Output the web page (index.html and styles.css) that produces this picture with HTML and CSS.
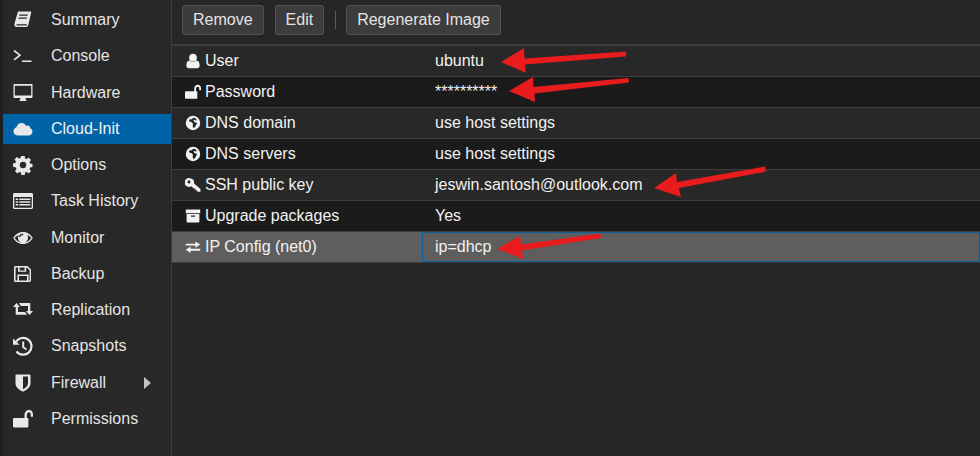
FILE: index.html
```html
<!DOCTYPE html>
<html lang="en">
  <head>
    <meta charset="UTF-8" />
    <title>Cloud-Init</title>
    <link rel="stylesheet" href="styles.css">
  </head>
  <body>
    <svg class="defs" width="0" height="0">
      <symbol id="i-book" viewBox="0 0 20 20"><path d="M5 1.5h12.5c.6 0 .9.5.7 1.1L15.3 15c-.4 1.3-1 2-2.3 2H3.5c-1.3 0-2.4-1-2-3L1.8 12.5 5 1.5zM6.5 4.5l-.4 1.2h8.4l.4-1.2H6.500zM5.600 7.500l-.4 1.200h8.400l.4-1.200H5.600zM3.600 14.300c-.3.800 0 1.200.7 1.200h8.700c.5 0 .8-.2 1-.7l.2-.5H3.600z" fill-rule="evenodd"/></symbol>
      <symbol id="i-term" viewBox="0 0 20 20"><path d="M1 4.500l6 4.700-6 4.700M9 15.200h9.500" fill="none" stroke="currentColor" stroke-width="1.600"/></symbol>
      <symbol id="i-desktop" viewBox="0 0 20 20"><path d="M1.500 1h17c.6 0 1 .4 1 1v12c0 .6-.4 1-1 1h-6c0 1 .5 1.700 1 2.200v.8h-7v-.8c.5-.5 1-1.200 1-2.200h-6c-.6 0-1-.4-1-1V2c0-.6.4-1 1-1zM1.800 2.800v9.700h16.400V2.800H1.800z" fill-rule="evenodd"/></symbol>
      <symbol id="i-cloud" viewBox="0 0 20 20"><path d="M5 16.500c-2.500 0-4.500-1.800-4.500-4.200 0-2 1.300-3.600 3.100-4C4 5.800 6 4 8.500 4c2.100 0 3.800 1.200 4.600 3 .5-.3 1-.4 1.500-.4 1.500 0 2.700 1.200 2.700 2.700 1.300.5 2.200 1.700 2.200 3.200 0 2.200-1.700 4-4 4H5z"/></symbol>
      <symbol id="i-gear" viewBox="0 0 20 20"><path d="M8.300 1h3.400l.4 2.500 1.500.6 2.100-1.500 2.300 2.300-1.500 2.100.6 1.500 2.400.4v3.200l-2.400.4-.6 1.500 1.500 2.100-2.300 2.300-2.100-1.500-1.500.6-.4 2.400H8.300l-.4-2.400-1.500-.6-2.100 1.500-2.300-2.300 1.500-2.100-.6-1.500L0 11.600V8.400l2.400-.4.6-1.500-1.500-2.100 2.300-2.300 2.100 1.500 1.500-.6L8.300 1zM10 6.800a3.200 3.200 0 1 0 0 6.400 3.200 3.200 0 0 0 0-6.400z" fill-rule="evenodd"/></symbol>
      <symbol id="i-tasks" viewBox="0 0 20 20"><path d="M1.500 2h17c.8 0 1.500.7 1.500 1.500v13c0 .8-.7 1.500-1.500 1.500h-17C.7 18 0 17.300 0 16.500v-13C0 2.700.7 2 1.500 2zM1.300 6v10.300c0 .2.200.4.400.4h16.600c.2 0 .4-.2.400-.4V6H1.300zM2.700 7.600h2.500v1.500H2.700zM6.300 7.600h11v1.500h-11zM2.700 10.300h2.500v1.500H2.700zM6.300 10.300h11v1.500h-11zM2.700 13h2.500v1.500H2.700zM6.300 13h11v1.500h-11z" fill-rule="evenodd"/></symbol>
      <symbol id="i-eye" viewBox="0 0 20 20"><path d="M10 4c4.300 0 7.800 2.600 9.800 6-2 3.400-5.500 6-9.800 6S2.200 13.400.2 10c2-3.400 5.500-6 9.800-6zM1.700 10c1.500 2.300 3.800 4.100 6.500 4.600A5.200 5.200 0 0 1 5 10c0-1.100.3-2.100.9-2.900-1.700.7-3.100 1.500-4.200 2.900zM10 5.500a4.500 4.500 0 0 0-4 2.500c0 .6.500 1 1 1s1-.5 1-1.200c.8-.5 1.300-.7 2-.7 0 0 .3 0 .3-.8 0-.3-.1-.5-.3-.8zM14.100 7.100c.6.800.9 1.800.9 2.900a5.200 5.200 0 0 1-3.200 4.600c2.700-.5 5-2.300 6.500-4.600-1.100-1.400-2.500-2.200-4.200-2.900z" fill-rule="evenodd"/></symbol>
      <symbol id="i-save" viewBox="0 0 20 20"><path d="M2.500 2h12l3.500 3.500v11c0 .8-.7 1.500-1.500 1.500h-14C1.700 18 1 17.300 1 16.500v-13C1 2.700 1.700 2 2.500 2zM2.600 3.600v12.800h1.800v-6h11.200v6h1V6.200l-2.900-2.600h-.5v4.200H5V3.600H2.600zM6.600 3.600v2.800h5V3.600h-5zM6 12v4.400h8V12H6z" fill-rule="evenodd"/></symbol>
      <symbol id="i-retweet" viewBox="0 0 20 20"><path d="M0 7l3.500-4L7 7H5v5h7l2.200 2.800H3.500c-.5 0-.8-.3-.8-.8V7H0zM5.800 3h10.700c.5 0 .8.300.8.800V11H20l-3.500 4L13 11h2V6H8L5.800 3z"/></symbol>
      <symbol id="i-history" viewBox="0 0 20 20"><path d="M3.200 5.500A8.400 8.400 0 1 1 3.500 15.500" fill="none" stroke="currentColor" stroke-width="2.200"/><path d="M0 2.500l6.500 6.300H0z"/><path d="M9.200 5.500h2v5.300l3 2.100-1.100 1.400-3.900-2.900V5.500z"/></symbol>
      <symbol id="i-shield" viewBox="0 0 20 20"><path d="M3.300 1.500h13.400c.5 0 .8.300.8.800v8.200c0 4-4.300 6.800-7.500 8.200-3.200-1.400-7.500-4.200-7.500-8.200V2.300c0-.5.300-.8.800-.8zM10 3.500v12.700c2.500-1.300 5-3.100 5-5.700v-7h-5z" fill-rule="evenodd"/></symbol>
      <symbol id="i-unlock" viewBox="0 0 20 20"><path d="M1 9h10.500V6.200C11.500 3 13.500 1 16 1s4 2 4 4.500v2.300h-2.200V5.600c0-1.200-.7-2.300-1.800-2.300s-2.200 1-2.200 3V9h.7c.5 0 .9.400.9.900v7.700c0 .5-.4.900-.9.900H1.100c-.6 0-1.100-.4-1.100-.9V9.900C0 9.400.5 9 1 9z"/></symbol>
      <symbol id="i-user" viewBox="0 0 20 20"><circle cx="10" cy="5.800" r="4.800"/><path d="M5.500 9.500c1.200 1 2.800 1.500 4.500 1.500s3.300-.5 4.500-1.500c2.500.2 3.800 2.500 3.800 6 0 2-1.200 3.500-3 3.500H4.700c-1.800 0-3-1.500-3-3.500 0-3.500 1.300-5.800 3.800-6z"/></symbol>
      <symbol id="i-globe" viewBox="0 0 20 20"><path d="M10 1a9 9 0 1 1 0 18 9 9 0 0 1 0-18zM11 3.500l-1.500.5-1 1.500-2-.5-1.500 2 1 1.500 2.500.5 1.500 2-.5 3 1.500 2.500 2-2 1-2.500 1.500-1-1.500-1.500-2-.5L10.500 7l1.500-1 1.500 1 1.500-.5-2-2.500-2-.5z" fill-rule="evenodd"/></symbol>
      <symbol id="i-key" viewBox="0 0 20 20"><path d="M6 1.500a5.500 5.500 0 0 1 5.300 6.700l8 6.800v3.500h-3.800l-.5-2h-2v-2h-2l-3-3A5.500 5.500 0 1 1 6 1.500zM5 4.200a1.900 1.900 0 1 0 0 3.800 1.900 1.900 0 0 0 0-3.800z" fill-rule="evenodd"/></symbol>
      <symbol id="i-archive" viewBox="0 0 20 20"><path d="M1 2h18v4.500H1zM2 7.500h16v9.500c0 .6-.4 1-1 1H3c-.6 0-1-.4-1-1V7.500zM7.500 9.500v1.500h5V9.500h-5z" fill-rule="evenodd"/></symbol>
      <symbol id="i-exchange" viewBox="0 0 20 20"><path d="M1 5.800h12V3l6 4-6 4V8.200H1zM19 12.200v2.400H7v2.900l-6-4.100 6-4v2.800z"/></symbol>
    </svg>

    <div class="page">
      <nav class="sidebar">
        <a class="nav-item"><svg class="nav-icon"><use href="#i-book"/></svg>Summary</a>
        <a class="nav-item"><svg class="nav-icon"><use href="#i-term"/></svg>Console</a>
        <a class="nav-item"><svg class="nav-icon"><use href="#i-desktop"/></svg>Hardware</a>
        <a class="nav-item active"><svg class="nav-icon"><use href="#i-cloud"/></svg>Cloud-Init</a>
        <a class="nav-item"><svg class="nav-icon"><use href="#i-gear"/></svg>Options</a>
        <a class="nav-item"><svg class="nav-icon"><use href="#i-tasks"/></svg>Task History</a>
        <a class="nav-item"><svg class="nav-icon"><use href="#i-eye"/></svg>Monitor</a>
        <a class="nav-item"><svg class="nav-icon"><use href="#i-save"/></svg>Backup</a>
        <a class="nav-item"><svg class="nav-icon"><use href="#i-retweet"/></svg>Replication</a>
        <a class="nav-item"><svg class="nav-icon"><use href="#i-history"/></svg>Snapshots</a>
        <a class="nav-item"><svg class="nav-icon"><use href="#i-shield"/></svg>Firewall<span class="caret"></span></a>
        <a class="nav-item"><svg class="nav-icon"><use href="#i-unlock"/></svg>Permissions</a>
      </nav>

      <main class="content">
        <div class="toolbar">
          <button class="btn">Remove</button>
          <button class="btn">Edit</button>
          <span class="sep"></span>
          <button class="btn">Regenerate Image</button>
        </div>

        <div class="row">
          <div class="key"><svg class="row-icon"><use href="#i-user"/></svg>User</div>
          <div class="val">ubuntu</div>
        </div>
        <div class="row alt">
          <div class="key"><svg class="row-icon"><use href="#i-unlock"/></svg>Password</div>
          <div class="val">**********</div>
        </div>
        <div class="row">
          <div class="key"><svg class="row-icon"><use href="#i-globe"/></svg>DNS domain</div>
          <div class="val">use host settings</div>
        </div>
        <div class="row alt">
          <div class="key"><svg class="row-icon"><use href="#i-globe"/></svg>DNS servers</div>
          <div class="val">use host settings</div>
        </div>
        <div class="row">
          <div class="key"><svg class="row-icon"><use href="#i-key"/></svg>SSH public key</div>
          <div class="val">jeswin.santosh@outlook.com</div>
        </div>
        <div class="row alt">
          <div class="key"><svg class="row-icon"><use href="#i-archive"/></svg>Upgrade packages</div>
          <div class="val">Yes</div>
        </div>
        <div class="row selected">
          <div class="key"><svg class="row-icon"><use href="#i-exchange"/></svg>IP Config (net0)</div>
          <div class="val">ip=dhcp</div>
        </div>
      </main>
    </div>

    <!-- red arrows drawn on top of the screenshot -->
    <svg class="arrows" width="980" height="456" viewBox="0 0 980 456">
      <path d="M501 62L524 48 524.500 58.500 626 51.500 626 56.500 525 64.500 526 73z"/>
      <path d="M509 91L533 77 533.500 87 628.500 78 629 82.500 534.500 93.500 535 102z"/>
      <path d="M654 188L676 173 677 182 765 166.500 766 171.500 679 188 681 197z"/>
      <path d="M497 249L520 236 521 244.500 600.500 233.500 601 238 522 250.500 523 259z"/>
    </svg>
  </body>
</html>
```

FILE: styles.css
```css
* {
  box-sizing: border-box;
}

html,
body {
  margin: 0;
  height: 100%;
  overflow: hidden;
}

body {
  background-color: #262626;
  color: #f2f2f2;
  font-family: "Liberation Sans", Arial, sans-serif;
  font-size: 16px;
}

.defs {
  position: absolute;
}

.page {
  display: flex;
  height: 456px;
}

.sidebar {
  width: 172px;
  flex: none;
  display: flex;
  flex-direction: column;
  gap: 6.25px;
  padding-top: 5px;
  border-left: 3px solid #1f1f1f;
  border-right: 1px solid #3e3e3e;
  background-color: #282828;
}

.nav-item {
  display: flex;
  align-items: center;
  height: 30px;
  color: #e4e4e4;
}

.nav-item.active {
  background-color: #0063a8;
  color: #f2f2f2;
}

.nav-icon {
  width: 20px;
  height: 20px;
  flex: none;
  margin: 0 18px 0 10px;
  fill: #e8e8e8;
  color: #e8e8e8;
}

.caret {
  margin-left: auto;
  margin-right: 20px;
  border-left: 7px solid #c4c4c4;
  border-top: 6px solid transparent;
  border-bottom: 6px solid transparent;
}

.content {
  flex: 1;
  min-width: 0;
}

.toolbar {
  display: flex;
  align-items: center;
  height: 46px;
  padding: 0 10px 5px;
  border-bottom: 2px solid #3e3e3e;
}

.btn {
  height: 30px;
  margin-right: 11px;
  padding: 0 10px;
  border: 1px solid #525252;
  border-radius: 3px;
  background-color: #3c3c3c;
  color: #e4e4e4;
  font-family: inherit;
  font-size: 16px;
}

.sep {
  width: 1px;
  height: 18px;
  margin-right: 10px;
  background-color: #5a5a5a;
}

.row {
  display: grid;
  grid-template-columns: 250px 1fr;
  height: 31px;
  line-height: 30px;
  border-bottom: 1px solid #3e3e3e;
  background-color: #282828;
}

.row.alt {
  background-color: #1b1b1b;
}

.row.selected {
  background-color: #5e5e5e;
}

.key {
  display: flex;
  align-items: center;
  padding-left: 13px;
}

.val {
  padding-left: 13px;
}

.selected .val {
  padding-left: 12px;
  border: 1px solid #0a5f9e;
  line-height: 28px;
}

.row-icon {
  width: 16px;
  height: 16px;
  flex: none;
  margin-right: 4px;
  fill: #f2f2f2;
  color: #f2f2f2;
}

.arrows {
  position: absolute;
  top: 0;
  left: 0;
  fill: #e81c1c;
  pointer-events: none;
}
```
